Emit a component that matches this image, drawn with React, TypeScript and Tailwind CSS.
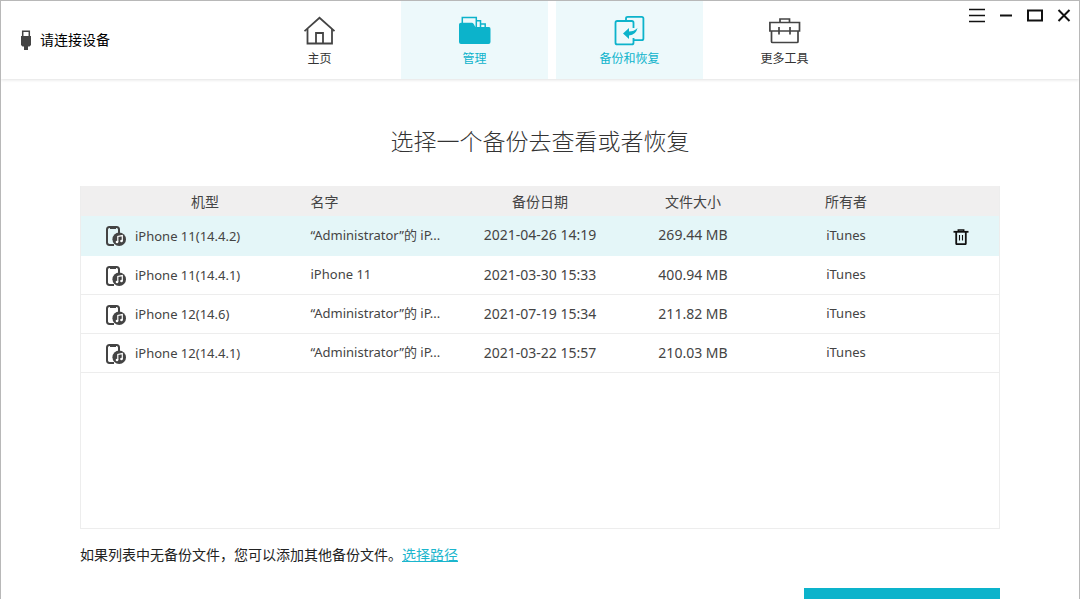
import { useState, type ReactNode } from "react";

type Backup = {
  id: number;
  model: string;
  name: string;
  date: string;
  size: string;
  owner: string;
};

const backups: Backup[] = [
  { id: 1, model: "iPhone 11(14.4.2)", name: "“Administrator”的 iP...", date: "2021-04-26 14:19", size: "269.44 MB", owner: "iTunes" },
  { id: 2, model: "iPhone 11(14.4.1)", name: "iPhone 11", date: "2021-03-30 15:33", size: "400.94 MB", owner: "iTunes" },
  { id: 3, model: "iPhone 12(14.6)", name: "“Administrator”的 iP...", date: "2021-07-19 15:34", size: "211.82 MB", owner: "iTunes" },
  { id: 4, model: "iPhone 12(14.4.1)", name: "“Administrator”的 iP...", date: "2021-03-22 15:57", size: "210.03 MB", owner: "iTunes" },
];

const UsbIcon = () => (
  <svg className="w-3 h-5" viewBox="0 0 12 20" fill="none">
    <path d="M2.7 6.5V1.2h6.6v5.3" stroke="#444" strokeWidth="1.5" />
    <path d="M1 6h10v9l-1.500 1.500H8V20H4v-3.500H2.500L1 15z" fill="#444" />
  </svg>
);

const HomeIcon = () => (
  <svg className="w-8 h-8" viewBox="0 0 32 32" fill="none" stroke="#444" strokeWidth="1.8">
    <path d="M.5 16.200L15.500 2.800l15 13.400" />
    <path d="M3.500 14v14.500H28V14" />
    <path d="M12 28.500V18h7v10.500" />
  </svg>
);

const FolderIcon = () => (
  <svg className="w-8 h-8" viewBox="0 0 32 32" fill="none">
    <path d="M3.300 9V2.600h14V12M17.300 5.800h4.200V12M21.500 9h4.700v4" stroke="#0cb3cb" strokeWidth="1.500" />
    <path d="M0 9.500Q0 7.800 2 7.800h11q1.300 0 2 1.700l.5 1q.5 1.500 2 1.500H30q1.500 0 1.500 2V27q0 2-2 2H2q-2 0-2-2z" fill="#0cb3cb" />
  </svg>
);

const RestoreIcon = () => (
  <svg className="w-8 h-8" viewBox="0 0 32 32" fill="none">
    <path d="M12 6V3.500q0-1.700 1.700-1.700h14q1.700 0 1.700 1.700v20q0 1.700-1.700 1.700H20" stroke="#0cb3cb" strokeWidth="1.800" />
    <path d="M19.500 13V7.700Q19.500 6 17.800 6H3.200Q1.500 6 1.500 7.700v20q0 1.700 1.700 1.700h14.600q1.700 0 1.700-1.700V23" stroke="#0cb3cb" strokeWidth="1.800" />
    <path d="M9 18.500l6-5.500v3.500q5 0 8.500-3.500-1.500 7-8.500 7.500V24z" fill="#0cb3cb" />
  </svg>
);

const ToolboxIcon = () => (
  <svg className="w-8 h-8" viewBox="0 0 32 32" fill="none" stroke="#444" strokeWidth="1.700">
    <path d="M11 7.500V4h9.500v3.500" />
    <path d="M.9 7.500h29.600v8.500H.9z" />
    <path d="M2.500 16v10.500q0 1 1 1H28q1 0 1-1V16" />
    <path d="M10 12v7.500M21 12v7.500" />
  </svg>
);

const PhoneMusicIcon = () => (
  <svg className="w-5 h-5 shrink-0" viewBox="0 0 20 20" fill="none">
    <path d="M8 18.900H3.500Q1 18.900 1 16.500v-13Q1 1 3.500 1h7Q13 1 13 3.500V7" stroke="#444" strokeWidth="2" />
    <path d="M4 1h6v2H4z" fill="#444" />
    <circle cx="13.200" cy="13.200" r="6.800" fill="#444" />
    <path d="M11.800 16V10.500l4.500-.9V15" stroke="#fff" strokeWidth="1.200" />
    <circle cx="11" cy="16" r="1.300" fill="#fff" />
    <circle cx="15.500" cy="15" r="1.300" fill="#fff" />
  </svg>
);

const TrashIcon = () => (
  <svg className="w-4 h-4" viewBox="0 0 16 16" fill="none" stroke="#111">
    <path d="M.5 2.800h15" strokeWidth="1.800" />
    <path d="M5.300 2.500V1h5.400v1.500" strokeWidth="1.500" />
    <path d="M3.200 3v11.500q0 .7.7.7h8.200q.7 0 .7-.7V3" strokeWidth="1.800" />
    <path d="M6.500 6v5.500M9.500 6v5.500" strokeWidth="1.100" />
  </svg>
);

const tabs: { id: string; label: string; icon: ReactNode; active: boolean }[] = [
  { id: "home", label: "主页", icon: <HomeIcon />, active: false },
  { id: "manage", label: "管理", icon: <FolderIcon />, active: true },
  { id: "backup", label: "备份和恢复", icon: <RestoreIcon />, active: true },
  { id: "tools", label: "更多工具", icon: <ToolboxIcon />, active: false },
];

const windowButtons = [
  { label: "菜单", path: "M0 2.500h16M0 8.500h16M0 14.500h16", width: 1.5 },
  { label: "最小化", path: "M2 8.500h12", width: 2 },
  { label: "最大化", path: "M1 3.500h14v10H1z", width: 2 },
  { label: "关闭", path: "M2.500 3l11 11M13.500 3l-11 11", width: 2 },
];

const Header = () => (
  <header className="flex h-[78px] bg-white shadow-[0_1px_3px_rgba(0,0,0,0.12)]">
    <div className="flex items-center gap-2 w-[245px] pl-[19px] text-sm text-black">
      <UsbIcon />
      请连接设备
    </div>
    <nav className="flex gap-2">
      {tabs.map((tab) => (
        <button
          key={tab.id}
          className={
            tab.active
              ? "flex flex-col items-center w-[147px] pt-3.5 gap-1 text-xs text-[#0cb3cb] bg-[#edf9fb]"
              : "flex flex-col items-center w-[147px] pt-3.5 gap-1 text-xs text-[#333]"
          }
        >
          {tab.icon}
          {tab.label}
        </button>
      ))}
    </nav>
    <div className="flex items-start gap-[13px] ml-auto pt-1.5 pr-[7px]">
      {windowButtons.map((b) => (
        <button key={b.label} aria-label={b.label}>
          <svg className="w-4 h-[17px]" viewBox="0 0 16 17" fill="none" stroke="#111" strokeWidth={b.width}>
            <path d={b.path} />
          </svg>
        </button>
      ))}
    </div>
  </header>
);

const BackupTable = () => {
  const [selected, setSelected] = useState(1);

  return (
    <div className="min-h-[343px] border border-t-0 border-[#ededed]">
      <table className="w-full table-fixed text-sm text-[#444]">
        <thead>
          <tr className="h-[30px] bg-[#f0efef]">
            <th className="w-1/4 pl-[110px] pt-0.5 text-left font-normal">机型</th>
            <th className="w-1/6 pt-0.5 text-left font-normal">名字</th>
            <th className="w-1/6 pt-0.5 font-normal">备份日期</th>
            <th className="w-1/6 pt-0.5 font-normal">文件大小</th>
            <th className="w-1/6 pt-0.5 font-normal">所有者</th>
            <td className="w-1/12"></td>
          </tr>
        </thead>
        <tbody>
          {backups.map((row) => (
            <tr
              key={row.id}
              onClick={() => setSelected(row.id)}
              className={row.id === selected ? "h-[39px] border-b border-[#e4f6f8] bg-[#e4f6f8]" : "h-[39px] border-b border-[#ededed]"}
            >
              <td className="pl-[25px] pt-0.5 text-[13px]">
                <div className="flex items-center gap-[9px]">
                  <PhoneMusicIcon />
                  {row.model}
                </div>
              </td>
              <td className="whitespace-nowrap text-[13px]">{row.name}</td>
              <td className="text-center">{row.date}</td>
              <td className="text-center">{row.size}</td>
              <td className="text-center text-[13px]">{row.owner}</td>
              <td className="text-center">
                {row.id === selected && (
                  <button aria-label="删除" className="align-middle">
                    <TrashIcon />
                  </button>
                )}
              </td>
            </tr>
          ))}
        </tbody>
      </table>
    </div>
  );
};

export default function App() {
  return (
    <div className="h-screen overflow-hidden border border-b-0 border-[#b8b8b8] bg-white font-['Noto_Sans','Noto_Sans_CJK_SC',sans-serif]">
      <Header />
      <main className="px-[79px] pt-[46px]">
        <h1 className="mb-[29px] text-center text-[23px] leading-8 font-light text-[#333]">选择一个备份去查看或者恢复</h1>
        <BackupTable />
        <p className="mt-4 text-sm text-[#222]">
          如果列表中无备份文件，您可以添加其他备份文件。
          <a href="#path" className="text-[#1cb6cd] underline">
            选择路径
          </a>
        </p>
        <div className="flex justify-end mt-[23px]">
          <button aria-label="查看备份" className="w-[196px] h-10 bg-[#0cb3cb]"></button>
        </div>
      </main>
    </div>
  );
}
